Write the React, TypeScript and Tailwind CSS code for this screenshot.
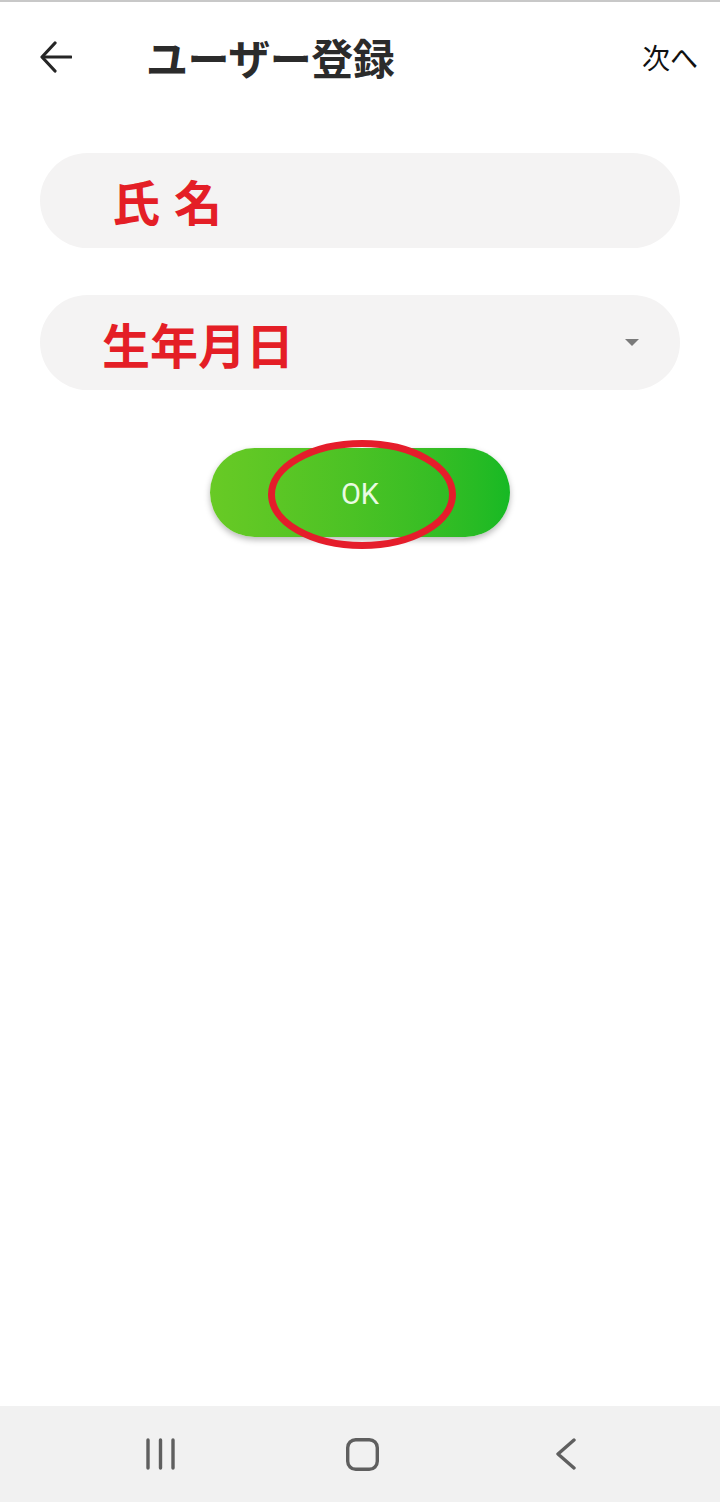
import React from "react";

export default function App() {
  const jp = { fontFamily: '"Noto Sans CJK JP", "Noto Sans", sans-serif' };
  return (
    <div className="w-[720px] h-[1502px] bg-white flex flex-col" style={jp}>
      <div className="h-[2px] bg-[#c8c8c8]" />
      <div className="h-[110px] flex items-center pl-[40px] pr-[22px]">
        <svg width="32" height="32" viewBox="0 0 32 32" fill="none" stroke="#262626" strokeWidth="3.2" strokeLinecap="round" strokeLinejoin="round">
          <path d="M31 16H3" />
          <path d="M15 2L2 16l13 14" />
        </svg>
        <div className="ml-[74px] text-[42px] font-bold text-[#2b2b2b] leading-none tracking-[-0.5px]">ユーザー登録</div>
        <div className="ml-auto text-[28px] text-[#111] leading-none">次へ</div>
      </div>

      <div className="mt-[41px] mx-[40px] h-[95px] rounded-full bg-[#f4f3f3] flex items-center pl-[72px] pb-[2px]">
        <span className="text-[48px] font-bold text-[#e41e26] leading-none">氏</span>
        <span className="ml-[14px] text-[48px] font-bold text-[#e41e26] leading-none">名</span>
      </div>

      <div className="mt-[47px] mx-[40px] h-[95px] rounded-full bg-[#f4f3f3] flex items-center pl-[62px] pr-[41px]">
        <span className="text-[48px] font-bold text-[#e41e26] leading-none">生年月日</span>
        <svg className="ml-auto" width="14" height="7" viewBox="0 0 14 7">
          <path d="M0 0h14L7 7z" fill="#7a7a7a" />
        </svg>
      </div>

      <div className="mt-[58px] flex justify-center">
        <div className="relative w-[300px] h-[89px] rounded-full bg-gradient-to-r from-[#68ca25] to-[#16b924] shadow-[0_3px_6px_rgba(0,0,0,0.28)] flex items-center justify-center pt-[4px]">
          <span className="text-[29px] text-[#eafbe2] leading-none" style={{ fontFamily: 'Roboto, "Liberation Sans", sans-serif' }}>OK</span>
          <svg className="absolute left-[58px] top-[-8px]" width="188" height="109" viewBox="0 0 188 109">
            <ellipse cx="94" cy="54.5" rx="90.5" ry="51" fill="none" stroke="#e51d2b" strokeWidth="7" />
          </svg>
        </div>
      </div>

      <div className="mt-auto h-[96px] bg-[#f1f1f1] flex items-center pl-[146px]">
        <svg width="30" height="32" viewBox="0 0 30 32" fill="none" stroke="#5f5f5f" strokeWidth="3.4" strokeLinecap="round">
          <path d="M2 2v28M14.5 2v28M27 2v28" />
        </svg>
        <svg className="ml-[170px]" width="33" height="33" viewBox="0 0 33 33" fill="none" stroke="#5f5f5f" strokeWidth="3.4">
          <rect x="1.7" y="1.7" width="29.6" height="29.6" rx="8" />
        </svg>
        <svg className="ml-[177px]" width="20" height="32" viewBox="0 0 20 32" fill="none" stroke="#5f5f5f" strokeWidth="3.4" strokeLinecap="round" strokeLinejoin="round">
          <path d="M18 2L2 16l16 14" />
        </svg>
      </div>
    </div>
  );
}
